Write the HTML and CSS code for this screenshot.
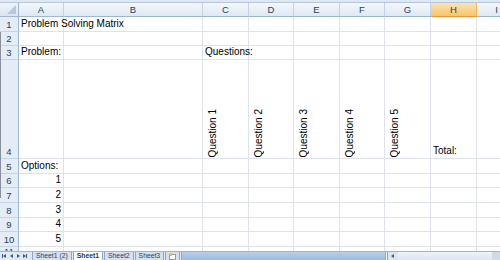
FILE: index.html
```html
<!DOCTYPE html>
<html lang="en">
<head>
    <meta charset="UTF-8">
    <title>Problem Solving Matrix</title>
    <link rel="stylesheet" href="styles.css">
</head>
<body>
    <div class="window">
        <div class="top-strip"></div>

        <div class="sheet">
            <!-- column headers -->
            <div class="corner"><span class="corner-tri"></span></div>
            <div class="col-head">A</div>
            <div class="col-head">B</div>
            <div class="col-head">C</div>
            <div class="col-head">D</div>
            <div class="col-head">E</div>
            <div class="col-head">F</div>
            <div class="col-head">G</div>
            <div class="col-head active">H</div>
            <div class="col-head">I</div>

            <!-- row 1 -->
            <div class="row-head">1</div>
            <div class="cell">Problem Solving Matrix</div>
            <div class="cell"></div><div class="cell"></div><div class="cell"></div><div class="cell"></div>
            <div class="cell"></div><div class="cell"></div><div class="cell"></div><div class="cell"></div>

            <!-- row 2 -->
            <div class="row-head">2</div>
            <div class="cell"></div><div class="cell"></div><div class="cell"></div><div class="cell"></div><div class="cell"></div>
            <div class="cell"></div><div class="cell"></div><div class="cell"></div><div class="cell"></div>

            <!-- row 3 -->
            <div class="row-head">3</div>
            <div class="cell">Problem:</div>
            <div class="cell"></div>
            <div class="cell">Questions:</div>
            <div class="cell"></div><div class="cell"></div><div class="cell"></div>
            <div class="cell"></div><div class="cell"></div><div class="cell"></div>

            <!-- row 4 -->
            <div class="row-head">4</div>
            <div class="cell"></div>
            <div class="cell"></div>
            <div class="cell"><span class="vtext">Question 1</span></div>
            <div class="cell"><span class="vtext">Question 2</span></div>
            <div class="cell"><span class="vtext">Question 3</span></div>
            <div class="cell"><span class="vtext">Question 4</span></div>
            <div class="cell"><span class="vtext">Question 5</span></div>
            <div class="cell">Total:</div>
            <div class="cell"></div>

            <!-- row 5 -->
            <div class="row-head">5</div>
            <div class="cell">Options:</div>
            <div class="cell"></div><div class="cell"></div><div class="cell"></div><div class="cell"></div>
            <div class="cell"></div><div class="cell"></div><div class="cell"></div><div class="cell"></div>

            <!-- rows 6-10 -->
            <div class="row-head">6</div>
            <div class="cell num">1</div>
            <div class="cell"></div><div class="cell"></div><div class="cell"></div><div class="cell"></div>
            <div class="cell"></div><div class="cell"></div><div class="cell"></div><div class="cell"></div>

            <div class="row-head">7</div>
            <div class="cell num">2</div>
            <div class="cell"></div><div class="cell"></div><div class="cell"></div><div class="cell"></div>
            <div class="cell"></div><div class="cell"></div><div class="cell"></div><div class="cell"></div>

            <div class="row-head">8</div>
            <div class="cell num">3</div>
            <div class="cell"></div><div class="cell"></div><div class="cell"></div><div class="cell"></div>
            <div class="cell"></div><div class="cell"></div><div class="cell"></div><div class="cell"></div>

            <div class="row-head">9</div>
            <div class="cell num">4</div>
            <div class="cell"></div><div class="cell"></div><div class="cell"></div><div class="cell"></div>
            <div class="cell"></div><div class="cell"></div><div class="cell"></div><div class="cell"></div>

            <div class="row-head">10</div>
            <div class="cell num">5</div>
            <div class="cell"></div><div class="cell"></div><div class="cell"></div><div class="cell"></div>
            <div class="cell"></div><div class="cell"></div><div class="cell"></div><div class="cell"></div>

            <!-- row 11, cut off by the tab bar -->
            <div class="row-head r11">11</div>
            <div class="cell"></div><div class="cell"></div><div class="cell"></div><div class="cell"></div><div class="cell"></div>
            <div class="cell"></div><div class="cell"></div><div class="cell"></div><div class="cell"></div>

            <div class="edge-line"></div>
        </div>

        <div class="tab-bar">
            <div class="tab-nav">
                <svg width="30" height="8" viewBox="0 0 30 8">
                    <g fill="#3c5a84">
                        <rect x="2" y="2" width="1" height="4"/>
                        <path d="M3 4 L6 2 L6 6 Z"/>
                        <path d="M10 4 L13 2 L13 6 Z"/>
                        <path d="M20 4 L17 2 L17 6 Z"/>
                        <path d="M26 4 L23 2 L23 6 Z"/>
                        <rect x="26" y="2" width="1" height="4"/>
                    </g>
                </svg>
            </div>
            <div class="tabs">
                <span class="tab">Sheet1 (2)</span>
                <span class="tab current">Sheet1</span>
                <span class="tab">Sheet2</span>
                <span class="tab">Sheet3</span>
                <span class="tab insert">
                    <svg width="9" height="8" viewBox="0 0 9 8">
                        <rect x="1.5" y="2.5" width="6" height="5" fill="#fff" stroke="#7f9db9" stroke-width="1"/>
                        <circle cx="3" cy="2.5" r="1.6" fill="#f3b33d"/>
                    </svg>
                </span>
            </div>
            <div class="tab-fill"></div>
            <div class="hscroll">
                <span class="split"></span>
                <span class="arrow-btn">
                    <svg width="6" height="6" viewBox="0 0 6 6">
                        <path d="M1 3 L4 1 L4 5 Z" fill="#3c5a84"/>
                    </svg>
                </span>
                <span class="track"></span>
                <span class="thumb-end"></span>
            </div>
        </div>
    </div>
</body>
</html>
```

FILE: styles.css
```css
* {
    box-sizing: border-box;
}
html, body {
    margin: 0;
    padding: 0;
}
body {
    font-family: "Liberation Sans", Arial, sans-serif;
    font-size: 10px;
    color: #000;
    background-color: #fff;
}
.window {
    width: 500px;
    height: 260px;
    display: flex;
    flex-direction: column;
    overflow: hidden;
}
.top-strip {
    height: 3px;
    flex: none;
    background-color: #dfe7f2;
    border-bottom: 1px solid #b6c7dc;
}
.sheet {
    position: relative;
    flex: 1;
    min-height: 0;
    overflow: hidden;
    display: grid;
    grid-template-columns: 19px 45px 139px 46px 45px 46px 45px 46px 46px 40px;
    grid-template-rows: 14px 15px 14px 14px 99px 15px 14px 15px 15px 14px 15px 15px;
}
.corner {
    position: relative;
    background: linear-gradient(#eef3fa, #dbe5f1);
    border-right: 1px solid #9eb6ce;
    border-bottom: 1px solid #9eb6ce;
}
.corner-tri {
    position: absolute;
    right: 2px;
    bottom: 2px;
    width: 0;
    height: 0;
    border-left: 9px solid transparent;
    border-bottom: 9px solid #b7c7dc;
}
.col-head {
    display: flex;
    align-items: center;
    justify-content: center;
    background: linear-gradient(#f3f7fc, #dfe8f3);
    border-right: 1px solid #c2d1e3;
    border-bottom: 1px solid #9eb6ce;
    color: #27415f;
    font-size: 9.5px;
}
.col-head.active {
    background: linear-gradient(#fbe3b4, #f6c56a);
    border-right-color: #f0b95a;
    border-bottom-color: #f29536;
    color: #27415f;
}
.row-head {
    display: flex;
    align-items: flex-end;
    justify-content: center;
    padding-bottom: 1px;
    background-color: #e4ecf7;
    border-right: 1px solid #9eb6ce;
    border-bottom: 1px solid #c5d3e5;
    color: #27415f;
    font-size: 9.5px;
}
.row-head.r11 {
    align-items: flex-start;
    line-height: 9px;
    padding-top: 0;
}
.cell {
    display: flex;
    align-items: flex-end;
    padding: 0 2px 1px 2px;
    border-right: 1px solid #dde2eb;
    border-bottom: 1px solid #dde2eb;
    white-space: nowrap;
    overflow: visible;
    line-height: 12px;
}
.cell.num {
    justify-content: flex-end;
}
.vtext {
    writing-mode: vertical-rl;
    transform: rotate(180deg);
    margin-left: 2px;
    line-height: 11px;
}
.edge-line {
    position: absolute;
    left: 0;
    top: 29px;
    width: 1px;
    height: 166px;
    background-color: #8b8f96;
}
.tab-bar {
    height: 9px;
    flex: none;
    display: flex;
    align-items: stretch;
    background-color: #dfe8f4;
    border-top: 1px solid #9fb5d2;
    font-size: 6.8px;
    color: #27415f;
    overflow: hidden;
}
.tab-nav {
    width: 31px;
    display: flex;
    align-items: flex-start;
}
.tabs {
    display: flex;
    align-items: stretch;
    margin-left: 1px;
}
.tab {
    display: flex;
    align-items: flex-start;
    padding: 0 3px;
    margin-right: 1px;
    background-color: #d4e0ef;
    border-left: 1px solid #90a8c8;
    border-right: 1px solid #90a8c8;
    line-height: 8px;
    white-space: nowrap;
}
.tab.current {
    background-color: #fff;
    font-weight: bold;
    color: #1c3557;
}
.tab.insert {
    padding: 0 2px;
}
.tab-fill {
    flex: 1;
    background: linear-gradient(#b9cde8, #9fbbe0);
    border-left: 1px solid #90a8c8;
}
.hscroll {
    width: 115px;
    display: flex;
    align-items: stretch;
    background-color: #e5ecf6;
}
.split {
    width: 3px;
    background-color: #f5f8fc;
    border-left: 1px solid #8ea7c8;
    border-right: 1px solid #8ea7c8;
}
.arrow-btn {
    width: 10px;
    display: flex;
    align-items: center;
    justify-content: center;
    background-color: #dbe4f1;
}
.track {
    flex: 1;
    background: linear-gradient(#eef2f8, #dde5f0);
}
.thumb-end {
    width: 8px;
    background-color: #d0dbe9;
}
```
